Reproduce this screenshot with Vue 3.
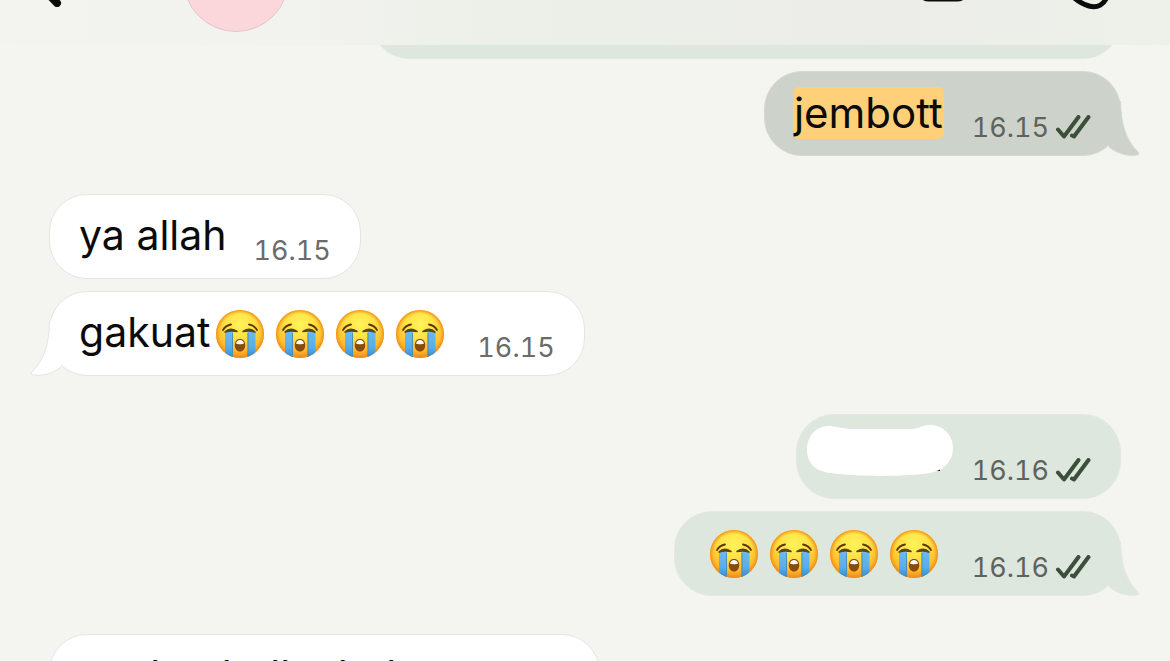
<script setup>
const messages = [
  { id: 1, side: 'out', text: 'jembott', marked: true, time: '16.15', tail: true, last: true },
  { id: 2, side: 'in', text: 'ya allah', time: '16.15' },
  { id: 3, side: 'in', text: 'gakuat', emojis: 4, time: '16.15', tail: true, last: true },
  { id: 4, side: 'out', hidden: true, time: '16.16' },
  { id: 5, side: 'out', emojis: 4, time: '16.16', tail: true, last: true },
  { id: 6, side: 'in', text: 'aneh mball mbak ya', time: '16.16' }
]
</script>

<template>
  <div class="screen">
    <svg class="defs" aria-hidden="true">
      <defs>
        <radialGradient id="face" cx="0.5" cy="0.3" r="0.72">
          <stop offset="0" stop-color="#fff35a" />
          <stop offset="0.4" stop-color="#ffe247" />
          <stop offset="0.75" stop-color="#fdbb2c" />
          <stop offset="1" stop-color="#f2851c" />
        </radialGradient>
        <radialGradient id="rim" cx="0.5" cy="0.5" r="0.5">
          <stop offset="0.84" stop-color="#f09a1c" stop-opacity="0" />
          <stop offset="1" stop-color="#ee8c14" stop-opacity="0.9" />
        </radialGradient>
        <linearGradient id="tear" x1="0" y1="0" x2="0" y2="1">
          <stop offset="0" stop-color="#6bb9ee" />
          <stop offset="0.6" stop-color="#58aeea" />
          <stop offset="1" stop-color="#2f86d4" />
        </linearGradient>
        <clipPath id="disc"><circle cx="24" cy="24" r="24" /></clipPath>
        <symbol id="sob" viewBox="0 0 48 48">
          <circle cx="24" cy="24" r="24" fill="url(#face)" />
          <circle cx="24" cy="24" r="24" fill="url(#rim)" />
          <g clip-path="url(#disc)">
            <path d="M9 22h8v26H9z M31.500 22H39.500v26h-8z" fill="url(#tear)" />
            <path d="M16.500 23v24M32 23v24" stroke="#4c8fae" stroke-width="1" />
          </g>
          <path d="M7 20Q9.500 15.500 15 14.500M41 20Q38.500 15.500 33 14.500" fill="none" stroke="#5c3a08" stroke-width="1.800" stroke-linecap="round" />
          <path d="M9 22Q14 17 21 21.500Q14.500 20.300 9 22zM39 22Q34 17 27 21.500Q33.500 20.300 39 22z" fill="#5c4510" stroke="#5c4510" stroke-width="1.500" stroke-linejoin="round" />
          <path d="M24 29c3.500 0 5.200 2.600 5.200 6.200S27 41.500 24 41.500s-5.200-2.700-5.200-6.300S20.500 29 24 29z" fill="#8a4b09" />
          <path d="M20 33.600c.5-2.400 2-3.700 4-3.700s3.500 1.300 4 3.700c-1.500.9-6.500.9-8 0z" fill="#fff" />
        </symbol>
      </defs>
    </svg>

    <header class="bar">
      <button class="back" aria-label="Back">
        <svg width="36" height="60" viewBox="0 0 36 60"><path d="M29 4L4 30L29 56" /></svg>
      </button>
      <span class="avatar"></span>
      <span class="space"></span>
      <button class="video" aria-label="Video call">
        <svg width="70" height="50" viewBox="0 0 70 50"><rect x="3" y="3" width="50" height="44" rx="11" /><path d="M53 20l14-11v32l-14-11" /></svg>
      </button>
      <button class="phone" aria-label="Voice call">
        <svg width="60" height="60" viewBox="0 0 60 60"><path d="M14 4C7 6 3 11 4 18C7 36 23 52 37 56C46 58.500 52 54 55 47C56 44 55 42 52 40L43 34C40 32 38 34 36 37C34 40 30 38 25 33S19 26 22 24C25 22 27 20 25 16L20 7C18 4 16 3.500 14 4z" /></svg>
      </button>
    </header>

    <main class="thread">
      <div class="row out earlier"><div class="bubble wide"></div></div>
      <div v-for="m in messages" :key="m.id" class="row" :class="[m.side, { last: m.last }]">
        <div class="bubble" :class="{ selected: m.marked }">
          <svg v-if="m.tail" class="tail" width="32" height="56" viewBox="0 0 32 56" aria-hidden="true">
            <path class="fill" d="M12.500 0C13 24 18 39 30 51Q32 53.500 29 54C18 55.500 9 52 1 46L0 0z" />
            <path class="edge" d="M12.500 0C13 24 18 39 30 51Q32 53.500 29 54C18 55.500 9 52 1 46" />
          </svg>
          <p class="body">
            <mark v-if="m.marked">{{ m.text }}</mark>
            <span v-else-if="m.text">{{ m.text }}</span>
            <span v-if="m.hidden" class="hidden">
              <svg width="148" height="54" viewBox="0 0 148 54" role="img" aria-label="Hidden text">
                <path d="M130 44h4v3h-4z" fill="#111" />
                <path d="M1 26C1 11 11 1 25 2C33 3 38 5 48 5H106C112 5 116 1 124 1C137 1 147 11 147 24C147 36 139 45 128 48C108 53 52 53 25 49C10 48 1 39 1 26z" fill="#fff" />
              </svg>
            </span>
            <svg v-for="n in m.emojis || 0" :key="n" class="emoji" viewBox="0 0 48 48" role="img" aria-label="Loudly crying face"><use href="#sob" /></svg>
          </p>
          <div class="meta">
            <time>{{ m.time }}</time>
            <svg v-if="m.side === 'out'" class="ticks" width="36" height="24" viewBox="0 0 36 24" role="img" aria-label="Delivered">
              <path d="M3 14.500L9 21.500L23.500 2M17 20.500L19 21.500L33.500 2" />
            </svg>
          </div>
        </div>
      </div>
    </main>
  </div>
</template>

<style>
body {
  margin: 0;
  background: #f4f4f0;
}
</style>

<style scoped>
.screen {
  height: 100vh;
  overflow: hidden;
  display: flex;
  flex-direction: column;
  background: #f4f4f0;
  font-family: Inter, "Liberation Sans", sans-serif;
  color: #0b0b0b;
}
.defs {
  position: absolute;
  width: 0;
  height: 0;
}
.bar {
  flex: none;
  display: flex;
  align-items: flex-end;
  height: 45px;
  box-sizing: border-box;
  padding: 0 58px 13px 28px;
  overflow: hidden;
  background: linear-gradient(90deg, #f3f4ef 0%, #f2f3ee 25%, #edefe9 42%, #ecede8 75%, #eef0ea 100%);
}
.bar button {
  flex: none;
  display: block;
  border: 0;
  padding: 0;
  background: none;
}
.bar svg {
  display: block;
  fill: none;
  stroke: #0b0b0b;
  stroke-width: 5;
  stroke-linecap: round;
  stroke-linejoin: round;
}
.bar .back {
  margin-bottom: 25px;
}
.back svg {
  stroke-width: 8;
}
.avatar {
  flex: none;
  width: 106px;
  height: 106px;
  margin-left: 119px;
  box-sizing: border-box;
  border: 1px solid #e6c5c9;
  border-radius: 50%;
  background: #fbd7dc;
}
.space {
  flex: 1;
}
.bar .video {
  margin-bottom: 30px;
}
.bar .phone {
  margin: 0 0 22px 67px;
}
.thread {
  flex: 1;
  display: flex;
  flex-direction: column;
  gap: 12px;
  padding: 0 49px;
}
.row {
  flex: none;
  display: flex;
}
.row.out {
  justify-content: flex-end;
}
.row.last {
  margin-bottom: 26px;
}
.earlier {
  height: 14px;
  align-items: flex-end;
  overflow: hidden;
}
.bubble {
  --fill: #fff;
  --line: #e5e5e3;
  position: relative;
  display: flex;
  align-items: flex-start;
  gap: 28px;
  flex: none;
  height: 85px;
  box-sizing: border-box;
  padding: 0 29px;
  border: 1px solid var(--line);
  border-radius: 38px;
  background: var(--fill);
}
.in .bubble {
  gap: 27px;
}
.out .bubble {
  --fill: #dee7de;
  --line: #e3e9e1;
}
.out .bubble.selected {
  --fill: #cdd3cb;
  --line: #d4d9d1;
}
.wide {
  width: 70%;
}
.tail {
  position: absolute;
  right: -20px;
  bottom: -2px;
}
.in .tail {
  right: auto;
  left: -20px;
  transform: scaleX(-1);
}
.tail .fill {
  fill: var(--fill);
}
.tail .edge {
  fill: none;
  stroke: var(--line);
}
.body {
  position: relative;
  display: flex;
  align-items: center;
  min-height: 52px;
  margin: 14px 0 0;
  font-size: 41px;
  line-height: 52px;
  white-space: nowrap;
}
.selected .body {
  margin-top: 15px;
  font-size: 42px;
}
mark {
  margin-left: -1px;
  padding: 0 1px;
  border-radius: 6px;
  background: #ffd07a;
  color: inherit;
}
.emoji {
  width: 48px;
  height: 48px;
  margin: 4px 6px 0;
}
.hidden {
  width: 118px;
  height: 52px;
}
.hidden svg {
  position: absolute;
  left: -20px;
  top: -5px;
}
.meta {
  position: relative;
  display: flex;
  align-items: center;
  gap: 6px;
  margin-top: 39px;
  color: #6b6b6b;
}
time {
  min-width: 76px;
  font-size: 27px;
  line-height: 34px;
  font-variant-numeric: tabular-nums;
}
.out .meta {
  color: #5c645c;
}
.ticks {
  margin-bottom: 2px;
  fill: none;
  stroke: #3c4f3a;
  stroke-width: 4;
  stroke-linecap: round;
  stroke-linejoin: round;
}
</style>
